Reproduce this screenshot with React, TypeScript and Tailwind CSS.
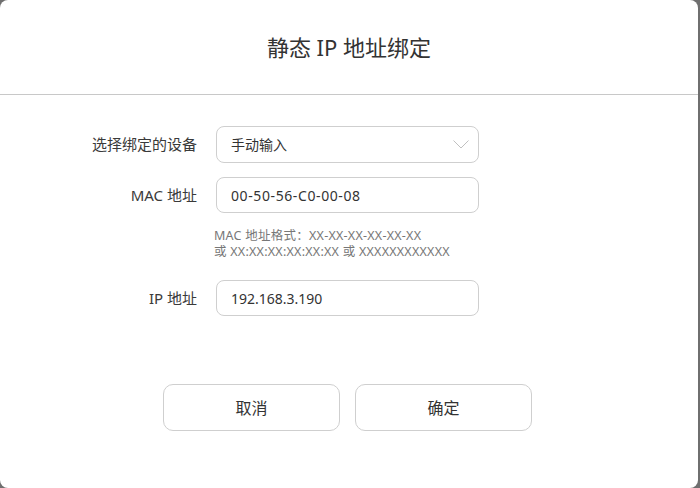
import React from "react";

const font = { fontFamily: '"Segoe UI", "Noto Sans", "Noto Sans CJK SC", sans-serif' };

export default function App() {
  return (
    <div className="w-[700px] h-[488px] bg-[#6f6f6f]" style={font}>
      <div className="w-[698px] h-[488px] bg-white rounded-lg flex flex-col">
        <div className="h-[95px] flex items-center justify-center border-b border-[#c8c8c8] shrink-0">
          <span className="text-[22px] text-[#333] pt-[1px]">静态 IP 地址绑定</span>
        </div>
        <div className="flex flex-col pt-[31px]">
          <div className="flex items-center h-[37px]">
            <div className="w-[197px] text-right text-[15px] text-[#3a3a3a]">选择绑定的设备</div>
            <div className="ml-[19px] w-[263px] h-[37px] border border-[#cfcfcf] rounded-lg flex items-center justify-between pl-[14px] pr-[9px]">
              <span className="text-[14px] text-[#333]">手动输入</span>
              <svg width="16" height="9" viewBox="0 0 16 9" fill="none">
                <path d="M0.5 0.5 L8 8 L15.5 0.5" stroke="#b0b0b0" strokeWidth="0.8" />
              </svg>
            </div>
          </div>
          <div className="flex items-center h-[36px] mt-[14px]">
            <div className="w-[197px] text-right text-[15px] text-[#3a3a3a]">MAC 地址</div>
            <div className="ml-[19px] w-[263px] h-[36px] border border-[#cfcfcf] rounded-lg flex items-center pl-[14px]">
              <span className="text-[14px] text-[#333] tracking-[0.6px]">00-50-56-C0-00-08</span>
            </div>
          </div>
          <div className="ml-[214px] mt-[15px] text-[12.5px] leading-[16px] text-[#777] tracking-[0.25px]">
            <div>MAC 地址格式：XX-XX-XX-XX-XX-XX</div>
            <div>或 XX:XX:XX:XX:XX:XX 或 XXXXXXXXXXXX</div>
          </div>
          <div className="flex items-center h-[36px] mt-[20px]">
            <div className="w-[197px] text-right text-[15px] text-[#3a3a3a]">IP 地址</div>
            <div className="ml-[19px] w-[263px] h-[36px] border border-[#cfcfcf] rounded-lg flex items-center pl-[14px]">
              <span className="text-[14px] text-[#333]">192.168.3.190</span>
            </div>
          </div>
          <div className="flex ml-[163px] mt-[68px] gap-[15px]">
            <div className="w-[177px] h-[47px] border border-[#cfcfcf] rounded-[10px] flex items-center justify-center text-[16px] text-[#333]">取消</div>
            <div className="w-[177px] h-[47px] border border-[#cfcfcf] rounded-[10px] flex items-center justify-center text-[16px] text-[#333]">确定</div>
          </div>
        </div>
      </div>
    </div>
  );
}
